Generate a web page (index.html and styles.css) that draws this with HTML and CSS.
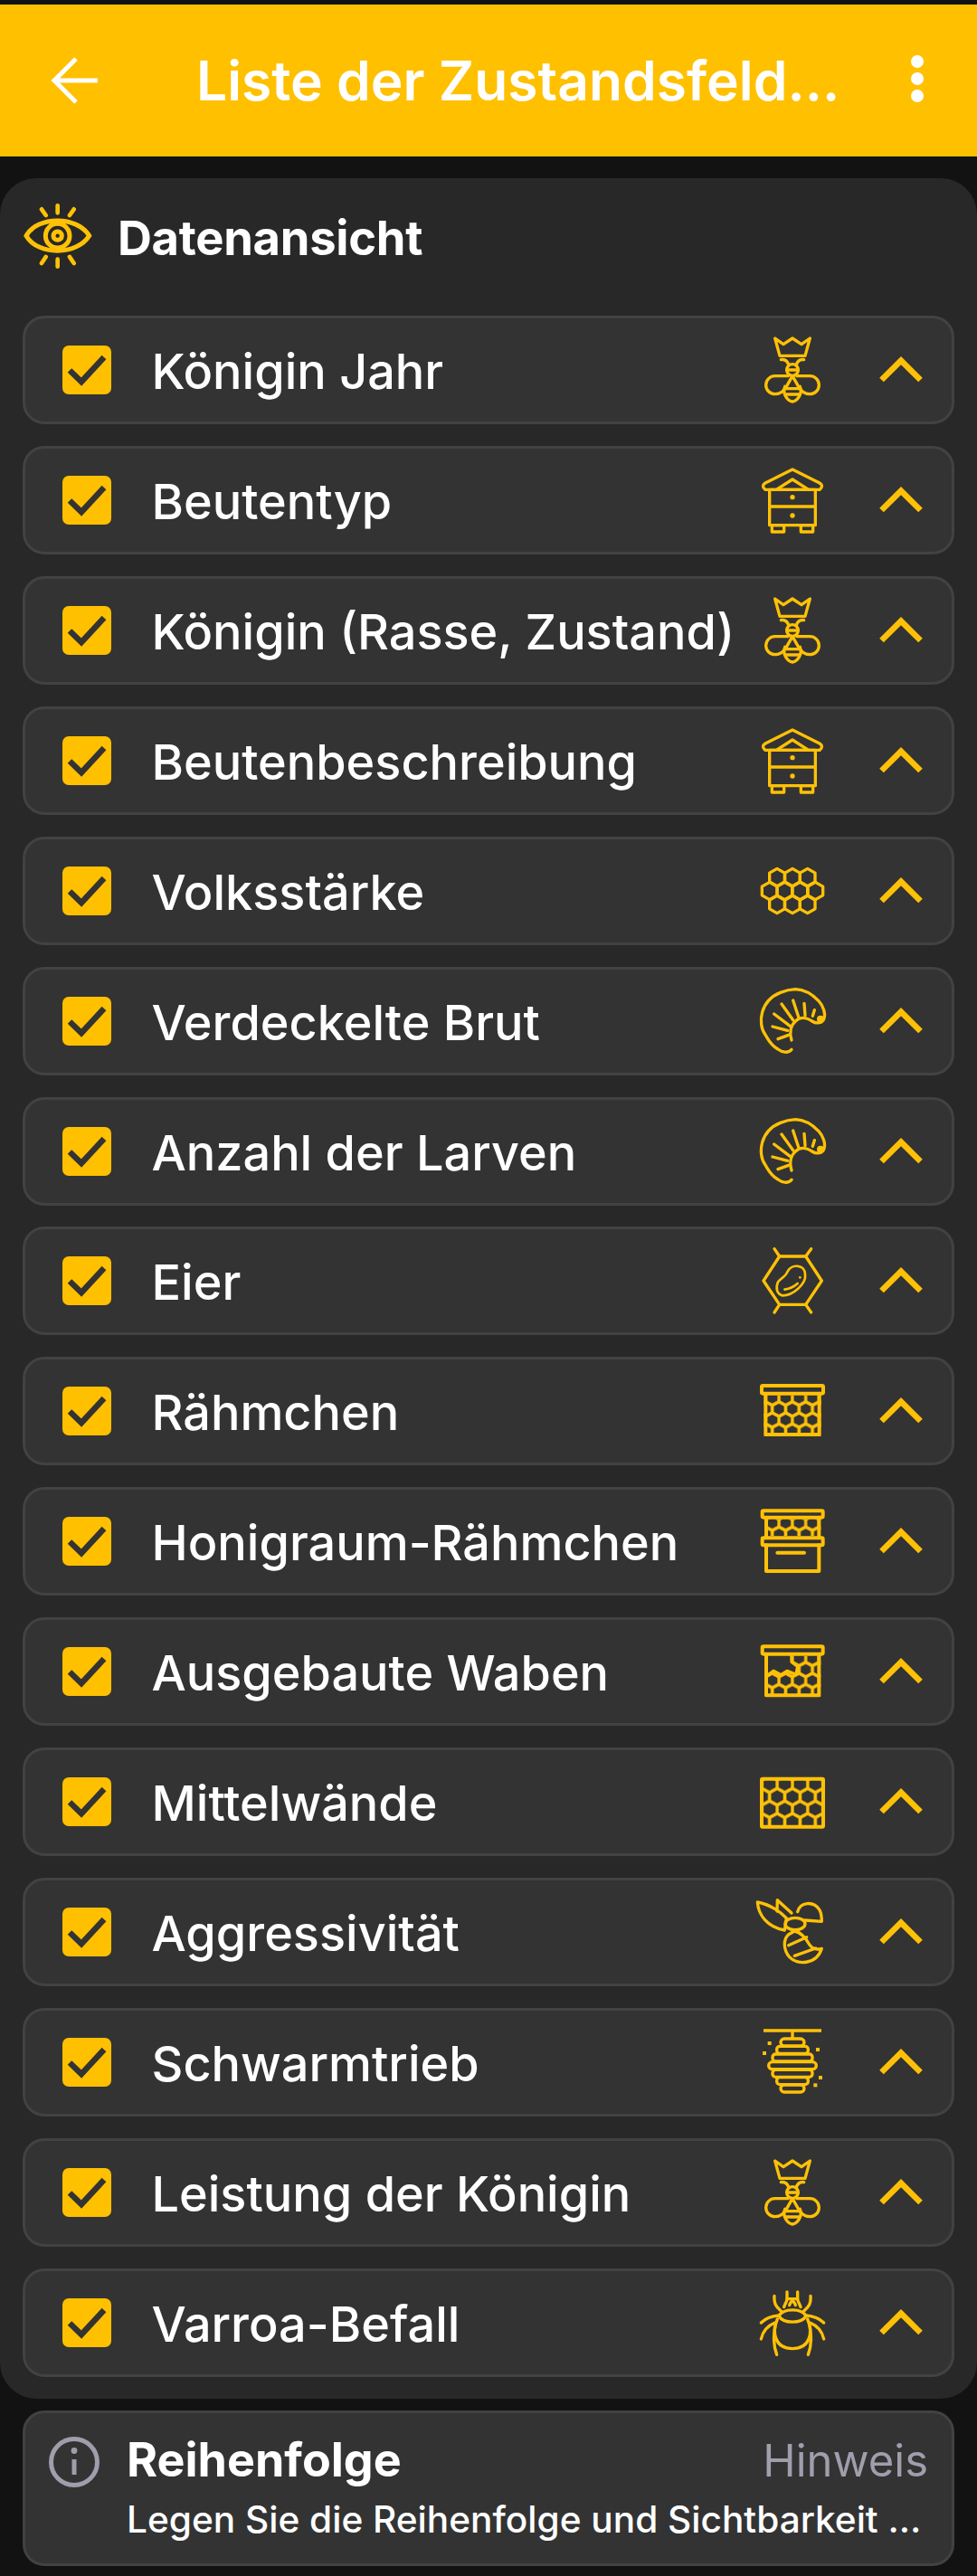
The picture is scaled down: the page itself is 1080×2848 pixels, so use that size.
FILE: index.html
```html
<!DOCTYPE html>
<html lang="de">
<head>
  <meta charset="UTF-8">
  <meta name="viewport" content="width=device-width, initial-scale=1.0">
  <title>Liste der Zustandsfelder</title>
  <link rel="stylesheet" href="styles.css">
</head>
<body>
  <!-- Icon-Definitionen -->
  <svg class="defs" aria-hidden="true">
    <defs>
      <polygon id="hex" points="0,-29 25,-14.5 25,14.5 0,29 -25,14.5 -25,-14.5"/>
      <polygon id="hex-s" points="0,-24.4 22.2,-12.2 22.2,12.2 0,24.4 -22.2,12.2 -22.2,-12.2"/>
      <polygon id="hex-l" points="0,-27.7 25.3,-13.8 25.3,13.8 0,27.7 -25.3,13.8 -25.3,-13.8"/>

      <pattern id="comb" patternUnits="userSpaceOnUse" width="44.4" height="73" patternTransform="translate(1.4 0.75)">
        <g fill="none" stroke="#ffc107" stroke-width="10">
          <use href="#hex-s" x="22.2" y="18.25"/><use href="#hex-s" x="22.2" y="91.25"/>
          <use href="#hex-s" x="0" y="54.75"/><use href="#hex-s" x="44.4" y="54.75"/>
          <use href="#hex-s" x="0" y="-18.25"/><use href="#hex-s" x="44.4" y="-18.25"/>
        </g>
      </pattern>
      <pattern id="comb-honey" href="#comb" patternTransform="translate(1.4 56.75)"/>
      <pattern id="comb-wide" patternUnits="userSpaceOnUse" width="50.6" height="83" patternTransform="translate(33.7 56.25)">
        <g fill="none" stroke="#ffc107" stroke-width="10">
          <use href="#hex-l" x="25.3" y="20.75"/><use href="#hex-l" x="25.3" y="103.75"/>
          <use href="#hex-l" x="0" y="62.25"/><use href="#hex-l" x="50.6" y="62.25"/>
          <use href="#hex-l" x="0" y="-20.75"/><use href="#hex-l" x="50.6" y="-20.75"/>
        </g>
      </pattern>
      <clipPath id="partial-clip">
        <polygon points="132,83 230,83 230,220 42,220 42,152 52,148 72,133 97,146 117,133 147,145 152,118 132,103"/>
      </clipPath>

      <symbol id="i-chevron" viewBox="0 0 60 60">
        <polyline class="chev" points="8.5,41 30,19.6 51.5,41"/>
      </symbol>

      <symbol id="i-queen" viewBox="0 0 270 270">
        <g class="ico">
          <polygon points="77,30 105,50 135,30 165,50 193,30 177,88 93,88"/>
          <path d="M97 101 Q116 98 122 118 M173 101 Q154 98 148 118"/>
          <circle cx="135" cy="135" r="19"/>
          <path d="M116 135 H154"/>
          <path d="M120 155 H77 A30 30 0 0 0 77 215 C95 215 108 204 118 185 L135 155 L152 185 C162 204 175 215 193 215 A30 30 0 0 0 193 155 H150"/>
          <path d="M110 190 C100 215 120 238 135 240 C150 238 170 215 160 190"/>
          <path d="M114 197 H156 M110 216 H160"/>
        </g>
      </symbol>

      <symbol id="i-hive" viewBox="0 0 270 270">
        <g class="ico">
          <path d="M45 100 Q30 88 45 78 L135 33 L225 78 Q240 88 225 100 Z"/>
          <path d="M85 98 L135 66 L185 98"/>
          <rect x="59" y="100" width="152" height="118"/>
          <path d="M59 156 H211"/>
          <rect x="67" y="218" width="40" height="22"/>
          <rect x="163" y="218" width="40" height="22"/>
        </g>
        <circle class="ico-fill" cx="135" cy="125" r="8"/>
        <circle class="ico-fill" cx="135" cy="186" r="8"/>
      </symbol>

      <symbol id="i-comb" viewBox="0 0 270 270">
        <g class="ico">
          <use href="#hex" x="84" y="90"/><use href="#hex" x="135" y="90"/><use href="#hex" x="185" y="90"/>
          <use href="#hex" x="59" y="135"/><use href="#hex" x="109" y="135"/><use href="#hex" x="160" y="135"/><use href="#hex" x="211" y="135"/>
          <use href="#hex" x="84" y="180"/><use href="#hex" x="135" y="180"/><use href="#hex" x="185" y="180"/>
        </g>
      </symbol>

      <symbol id="i-larva" viewBox="0 0 270 270">
        <g class="ico">
          <path d="M132 229 C120 243 100 238 87 228 C60 212 55 195 45 180 C30 160 28 130 35 105 C45 70 70 50 95 40 C115 32 125 30 145 29 C175 30 200 45 222 68 C238 85 245 110 240 125 C235 142 215 145 200 135 C180 122 160 120 145 135 C128 150 125 175 132 198"/>
          <path d="M202 118 L208 98 M177 116 L174 76 M155 121 L137 66 M137 131 L99 78 M127 151 L74 111 M119 166 L69 153 M122 181 L87 194"/>
        </g>
        <circle class="ico-fill" cx="228" cy="128" r="12"/>
      </symbol>

      <symbol id="i-egg" viewBox="0 0 270 270">
        <g class="ico">
          <polygon points="39,135 92,54 179,54 232,135 179,214 92,214"/>
          <path d="M92 54 L75 29 M179 54 L197 29 M92 214 L75 240 M179 214 L197 240"/>
          <path class="ico-thin" d="M87 139 C97 124 112 124 119 104 C132 79 177 79 177 114 C182 144 137 184 102 184 C82 179 79 159 87 139 Z"/>
          <path class="ico-thin" d="M109 164 Q135 160 152 144"/>
        </g>
        <circle class="ico-fill" cx="160" cy="124" r="4"/>
      </symbol>

      <symbol id="i-frame" viewBox="0 0 270 270">
        <rect x="40" y="83" width="190" height="136" fill="url(#comb)"/>
        <g class="ico ico-thick">
          <rect x="33" y="51" width="204" height="26" rx="4"/>
          <path d="M46 77 V213 H224 V77"/>
        </g>
      </symbol>

      <symbol id="i-super" viewBox="0 0 270 270">
        <rect x="42" y="62" width="187" height="56" fill="url(#comb-honey)"/>
        <g class="ico ico-thick">
          <rect x="35" y="34" width="201" height="22" rx="4"/>
          <rect x="35" y="124" width="201" height="24" rx="4"/>
          <path d="M48 56 V124 M223 56 V124"/>
          <path d="M48 148 V234 H223 V148"/>
          <path d="M85 173 H174"/>
        </g>
      </symbol>

      <symbol id="i-partial" viewBox="0 0 270 270">
        <rect x="40" y="83" width="190" height="136" fill="url(#comb)" clip-path="url(#partial-clip)"/>
        <g class="ico ico-thick">
          <rect x="35" y="52" width="201" height="25" rx="4"/>
          <path d="M48 77 V214 H223 V77"/>
        </g>
        <g class="ico">
          <path d="M47 152 L72 133 L97 146 L117 133 L147 145 L152 118 L132 103 V80"/>
        </g>
      </symbol>

      <symbol id="i-wax" viewBox="0 0 270 270">
        <rect x="32" y="58" width="206" height="161" fill="url(#comb-wide)"/>
        <rect class="ico ico-thick" x="33" y="59" width="204" height="159" rx="3"/>
      </symbol>

      <symbol id="i-bee" viewBox="0 0 270 270">
        <g class="ico">
          <path d="M19 36 C62 44 97 69 115 89 L109 129 C52 119 22 79 19 36 Z"/>
          <path d="M85 29 L132 72 M85 29 L84 66"/>
          <path d="M152 68 C160 35 205 30 225 62 C232 75 232 90 232 100 L176 96"/>
          <ellipse cx="144" cy="108" rx="33" ry="20"/>
          <path d="M122 143 C103 160 105 195 125 218 C150 245 215 245 232 190 C215 195 200 190 190 175 C180 155 160 135 142 132 Z"/>
          <path d="M122 179 L182 152 M142 214 L212 189"/>
        </g>
      </symbol>

      <symbol id="i-skep" viewBox="0 0 270 270">
        <g class="ico">
          <path class="ico-flat" d="M39 30 H231 M135 30 V56"/>
          <rect x="96" y="57" width="78" height="24" rx="12"/>
          <rect x="83" y="82" width="104" height="24" rx="10"/>
          <rect x="69" y="108" width="132" height="24" rx="10"/>
          <rect x="56" y="134" width="158" height="24" rx="12"/>
          <rect x="69" y="160" width="132" height="24" rx="10"/>
          <rect x="83" y="185" width="104" height="24" rx="10"/>
          <rect x="96" y="210" width="78" height="24" rx="12"/>
        </g>
        <g class="ico-fill">
          <rect x="53" y="66" width="12" height="12"/><rect x="36" y="99" width="12" height="12"/>
          <rect x="213" y="87" width="12" height="12"/><rect x="222" y="180" width="12" height="12"/>
          <rect x="205" y="205" width="12" height="12"/>
        </g>
      </symbol>

      <symbol id="i-mite" viewBox="0 0 270 270">
        <g class="ico" transform="translate(-45 -69)">
          <path d="M135 182 C150 155 210 155 225 182 C210 208 150 208 135 182 Z"/>
          <path d="M130 192 C112 235 120 290 180 290 C240 290 248 235 230 192"/>
          <path d="M162 102 V125 C162 135 155 140 152 152 M197 102 V125 C197 135 204 140 207 152"/>
          <path d="M162 125 H197 M170 146 C174 130 186 130 190 146"/>
          <path d="M120 115 C118 140 125 150 142 165 M240 115 C242 140 235 150 218 165"/>
          <path d="M76 204 C90 190 110 182 135 180 M284 204 C270 190 250 182 225 180"/>
          <path d="M76 258 C82 232 96 215 120 205 M284 258 C278 232 264 215 240 205"/>
          <path d="M128 310 C115 275 118 245 122 215 M232 310 C245 275 242 245 238 215"/>
        </g>
      </symbol>
    </defs>
  </svg>

  <header class="appbar">
    <svg class="back" viewBox="0 0 60 60"><path d="M29 6 L5 30 L29 54 M5 30 H53"/></svg>
    <h1 class="appbar-title">Liste der Zustandsfeld...</h1>
    <div class="menu"><span></span><span></span><span></span></div>
  </header>

  <section class="panel">
    <div class="panel-head">
      <svg class="eye" viewBox="0 0 360 330">
        <path class="eye-line" d="M57 152 C95 85 225 85 266 152 C225 218 95 218 57 152 Z"/>
        <circle class="eye-line" cx="161" cy="152" r="40"/>
        <circle class="eye-line" cx="161" cy="152" r="14"/>
        <path class="eye-ray" d="M161 52 V76 M108 64 L122 84 M215 64 L201 84 M161 230 V254 M108 243 L122 222 M215 243 L201 222"/>
      </svg>
      <h2 class="panel-title">Datenansicht</h2>
    </div>

    <div class="list">
      <div class="row">
        <span class="check"><svg viewBox="0 0 54 54"><polyline points="8,27.5 21,40 46,13"/></svg></span>
        <span class="label">Königin Jahr</span>
        <svg class="icon"><use href="#i-queen"/></svg>
        <svg class="chevron"><use href="#i-chevron"/></svg>
      </div>
      <div class="row">
        <span class="check"><svg viewBox="0 0 54 54"><polyline points="8,27.5 21,40 46,13"/></svg></span>
        <span class="label">Beutentyp</span>
        <svg class="icon"><use href="#i-hive"/></svg>
        <svg class="chevron"><use href="#i-chevron"/></svg>
      </div>
      <div class="row">
        <span class="check"><svg viewBox="0 0 54 54"><polyline points="8,27.5 21,40 46,13"/></svg></span>
        <span class="label">Königin (Rasse, Zustand)</span>
        <svg class="icon"><use href="#i-queen"/></svg>
        <svg class="chevron"><use href="#i-chevron"/></svg>
      </div>
      <div class="row">
        <span class="check"><svg viewBox="0 0 54 54"><polyline points="8,27.5 21,40 46,13"/></svg></span>
        <span class="label">Beutenbeschreibung</span>
        <svg class="icon"><use href="#i-hive"/></svg>
        <svg class="chevron"><use href="#i-chevron"/></svg>
      </div>
      <div class="row">
        <span class="check"><svg viewBox="0 0 54 54"><polyline points="8,27.5 21,40 46,13"/></svg></span>
        <span class="label">Volksstärke</span>
        <svg class="icon"><use href="#i-comb"/></svg>
        <svg class="chevron"><use href="#i-chevron"/></svg>
      </div>
      <div class="row">
        <span class="check"><svg viewBox="0 0 54 54"><polyline points="8,27.5 21,40 46,13"/></svg></span>
        <span class="label">Verdeckelte Brut</span>
        <svg class="icon"><use href="#i-larva"/></svg>
        <svg class="chevron"><use href="#i-chevron"/></svg>
      </div>
      <div class="row">
        <span class="check"><svg viewBox="0 0 54 54"><polyline points="8,27.5 21,40 46,13"/></svg></span>
        <span class="label">Anzahl der Larven</span>
        <svg class="icon"><use href="#i-larva"/></svg>
        <svg class="chevron"><use href="#i-chevron"/></svg>
      </div>
      <div class="row">
        <span class="check"><svg viewBox="0 0 54 54"><polyline points="8,27.5 21,40 46,13"/></svg></span>
        <span class="label">Eier</span>
        <svg class="icon"><use href="#i-egg"/></svg>
        <svg class="chevron"><use href="#i-chevron"/></svg>
      </div>
      <div class="row">
        <span class="check"><svg viewBox="0 0 54 54"><polyline points="8,27.5 21,40 46,13"/></svg></span>
        <span class="label">Rähmchen</span>
        <svg class="icon"><use href="#i-frame"/></svg>
        <svg class="chevron"><use href="#i-chevron"/></svg>
      </div>
      <div class="row">
        <span class="check"><svg viewBox="0 0 54 54"><polyline points="8,27.5 21,40 46,13"/></svg></span>
        <span class="label">Honigraum-Rähmchen</span>
        <svg class="icon"><use href="#i-super"/></svg>
        <svg class="chevron"><use href="#i-chevron"/></svg>
      </div>
      <div class="row">
        <span class="check"><svg viewBox="0 0 54 54"><polyline points="8,27.5 21,40 46,13"/></svg></span>
        <span class="label">Ausgebaute Waben</span>
        <svg class="icon"><use href="#i-partial"/></svg>
        <svg class="chevron"><use href="#i-chevron"/></svg>
      </div>
      <div class="row">
        <span class="check"><svg viewBox="0 0 54 54"><polyline points="8,27.5 21,40 46,13"/></svg></span>
        <span class="label">Mittelwände</span>
        <svg class="icon"><use href="#i-wax"/></svg>
        <svg class="chevron"><use href="#i-chevron"/></svg>
      </div>
      <div class="row">
        <span class="check"><svg viewBox="0 0 54 54"><polyline points="8,27.5 21,40 46,13"/></svg></span>
        <span class="label">Aggressivität</span>
        <svg class="icon"><use href="#i-bee"/></svg>
        <svg class="chevron"><use href="#i-chevron"/></svg>
      </div>
      <div class="row">
        <span class="check"><svg viewBox="0 0 54 54"><polyline points="8,27.5 21,40 46,13"/></svg></span>
        <span class="label">Schwarmtrieb</span>
        <svg class="icon"><use href="#i-skep"/></svg>
        <svg class="chevron"><use href="#i-chevron"/></svg>
      </div>
      <div class="row">
        <span class="check"><svg viewBox="0 0 54 54"><polyline points="8,27.5 21,40 46,13"/></svg></span>
        <span class="label">Leistung der Königin</span>
        <svg class="icon"><use href="#i-queen"/></svg>
        <svg class="chevron"><use href="#i-chevron"/></svg>
      </div>
      <div class="row">
        <span class="check"><svg viewBox="0 0 54 54"><polyline points="8,27.5 21,40 46,13"/></svg></span>
        <span class="label">Varroa-Befall</span>
        <svg class="icon"><use href="#i-mite"/></svg>
        <svg class="chevron"><use href="#i-chevron"/></svg>
      </div>
    </div>
  </section>

  <section class="hint">
    <svg class="hint-icon" viewBox="0 0 60 60">
      <circle cx="30" cy="30" r="25.5"/>
      <path d="M30 27 V44"/>
      <circle class="hint-dot" cx="30" cy="17.5" r="3.4"/>
    </svg>
    <div class="hint-body">
      <div class="hint-top">
        <h3 class="hint-title">Reihenfolge</h3>
        <span class="hint-tag">Hinweis</span>
      </div>
      <p class="hint-text">Legen Sie die Reihenfolge und Sichtbarkeit ...</p>
    </div>
  </section>
</body>
</html>
```

FILE: styles.css
```css
html, body {
  margin: 0;
  padding: 0;
}
body {
  width: 1080px;
  height: 2848px;
  overflow: hidden;
  background-color: #121212;
  color: #fff;
  font-family: "Inter", "Liberation Sans", sans-serif;
}
h1, h2, h3, p {
  margin: 0;
}
.defs {
  display: block;
  width: 0;
  height: 0;
}

/* App bar */
.appbar {
  display: flex;
  align-items: center;
  height: 168px;
  margin-top: 5px;
  background-color: #ffc000;
}
.back {
  width: 60px;
  height: 60px;
  margin-left: 55px;
  flex: none;
  fill: none;
  stroke: #fff;
  stroke-width: 5;
}
.appbar-title {
  flex: 1;
  margin-left: 102px;
  font-size: 60.5px;
  font-weight: 600;
  line-height: 70px;
  white-space: nowrap;
}
.menu {
  display: flex;
  flex-direction: column;
  gap: 5px;
  margin-right: 59px;
  margin-bottom: 4px;
}
.menu span {
  width: 14px;
  height: 14px;
  border-radius: 50%;
  background-color: #fff;
}

/* Panel */
.panel {
  margin-top: 24px;
  padding: 13px 25px 24px;
  border-radius: 40px;
  background-color: #282828;
}
.panel-head {
  display: flex;
  align-items: center;
  height: 110px;
  margin: 0 0 29px -15px;
}
.eye {
  width: 120px;
  height: 110px;
  flex: none;
}
.eye-line {
  fill: none;
  stroke: #ffc107;
  stroke-width: 15;
}
.eye-ray {
  fill: none;
  stroke: #ffc107;
  stroke-width: 14;
  stroke-linecap: round;
}
.panel-title {
  margin-bottom: 5px;
  font-size: 52.5px;
  font-weight: 700;
  letter-spacing: -0.3px;
}

/* Liste */
.list {
  display: flex;
  flex-direction: column;
  gap: 23.93px;
}
.row {
  display: flex;
  align-items: center;
  box-sizing: border-box;
  height: 120px;
  padding: 0 26px 0 41px;
  border: 3px solid #424242;
  border-radius: 24px;
  background-color: #333;
}
.check {
  display: block;
  width: 54px;
  height: 54px;
  flex: none;
  border-radius: 7px;
  background-color: #ffc000;
}
.check svg {
  display: block;
  fill: none;
  stroke: #333;
  stroke-width: 6.5;
}
.label {
  flex: 1;
  margin-left: 44.5px;
  padding-top: 3px;
  font-size: 54px;
  font-weight: 500;
  white-space: nowrap;
}
.icon {
  width: 90px;
  height: 90px;
  flex: none;
  overflow: visible;
}
.chevron {
  width: 60px;
  height: 60px;
  flex: none;
  margin-left: 45px;
}
.chev {
  fill: none;
  stroke: #ffc107;
  stroke-width: 6.5;
}
.ico {
  fill: none;
  stroke: #ffc107;
  stroke-width: 10;
  stroke-linejoin: round;
  stroke-linecap: round;
}
.ico-thick {
  stroke-width: 12;
}
.ico-thin {
  stroke-width: 8;
}
.ico-flat {
  stroke-linecap: butt;
}
.ico-fill {
  fill: #ffc107;
}

/* Hinweis */
.hint {
  display: flex;
  box-sizing: border-box;
  height: 172px;
  margin: 13px 25px 0;
  padding: 24px 26px 0 24px;
  border: 3px solid #424242;
  border-radius: 24px;
  background-color: #333;
}
.hint-icon {
  width: 60px;
  height: 60px;
  flex: none;
  fill: none;
  stroke: #9e9eac;
  stroke-width: 5;
}
.hint-dot {
  fill: #9e9eac;
  stroke: none;
}
.hint-body {
  flex: 1;
  margin-left: 28px;
  margin-top: -3px;
}
.hint-top {
  display: flex;
  align-items: baseline;
  justify-content: space-between;
}
.hint-title {
  font-size: 52px;
  font-weight: 700;
  line-height: 62px;
}
.hint-tag {
  color: #9e9eac;
  font-size: 49px;
  font-weight: 400;
}
.hint-text {
  margin-top: 12px;
  font-size: 40.6px;
  font-weight: 500;
  line-height: 46px;
  white-space: nowrap;
}
```
